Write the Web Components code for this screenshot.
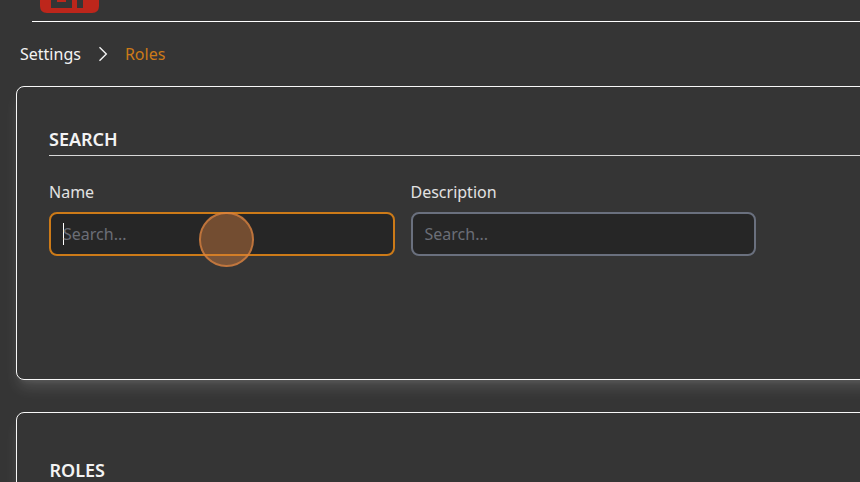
<!DOCTYPE html>
<html lang="en">
<head>
<meta charset="utf-8">
<title>Roles</title>
<style>
html,body{margin:0;height:100%;overflow:hidden;background:#353535}
body{font:16px/24px "Noto Sans",sans-serif;color:#f3f3f3}
</style>
</head>
<body>
<app-page></app-page>
<script>
const define = (name, html) => customElements.define(name, class extends HTMLElement {
  connectedCallback() {
    if (this.shadowRoot) return;
    const t = document.createElement('template');
    t.innerHTML = html;
    this.attachShadow({mode:'open'}).append(t.content.cloneNode(true));
  }
});

define('app-header', `<style>
:host{display:block;height:21px;margin-left:32px;border-bottom:1px solid #fff;overflow:hidden}
svg{display:block;margin-left:8px}
</style>
<svg width="59" height="13" viewBox="0 0 59 13"><path fill="#bd261b" d="M0 0H59V6Q59 13 52 13H7Q0 13 0 6Z"/><path fill="#353535" d="M11 0h6v2h9V0h6v8H11ZM37 0h6v8H37Z"/></svg>`);

define('bread-crumbs', `<style>
:host{display:flex;align-items:center;height:24px;padding:20px 0 20px 20px}
svg{display:block;margin:0 17px 0 17px}
.here{color:#cc7a18}
</style>
<span><slot name="parent"></slot></span>
<svg width="10" height="16" viewBox="0 0 10 16" fill="none" stroke="#f3f3f3" stroke-width="1.4"><path d="M1.5 1.2 8.3 8 1.5 14.8"/></svg>
<span class="here"><slot></slot></span>`);

define('panel-card', `<style>
:host{display:block;box-sizing:border-box;width:1100px;margin:0 0 32px 16px;padding:39px 32px;border:1px solid #f8f8f8;border-radius:8px;background:#353535;box-shadow:0 10px 15px -3px rgba(255,255,255,.14),0 4px 6px -4px rgba(255,255,255,.12)}
:host([spacious]){padding-top:44px}
h2{margin:0 0 25px;padding-bottom:1px;font-size:18px;line-height:27px;font-weight:600;text-transform:uppercase;border-bottom:1px solid #d8d8d8}
:host(:not([spacious])) h2{padding-bottom:2px;margin-bottom:24px}
:host([spacious]) h2{text-indent:.4px}
</style>
<h2><slot name="title"></slot></h2><slot></slot>`);

define('search-field', `<style>
:host{display:block;width:345.5px}
label{display:block;margin-bottom:8px;color:#e2e2e2}
.box{box-sizing:border-box;height:44px;display:flex;align-items:center;position:relative;padding:0 12px;border:2px solid #6a707e;border-radius:8px;background:#262626;color:#6b6e77}
:host([focused]) .box{border-color:#cc7a18}
.caret{display:none;width:1px;height:22px;background:#fff;margin-right:-1px}
:host([focused]) .caret{display:block}
</style>
<label><slot></slot></label><div class="box"><i class="caret"></i><span>Search...</span><slot name="overlay"></slot></div>`);

define('click-marker', `<style>
:host{position:absolute;left:148px;top:-2px;width:54.5px;height:54.5px;box-sizing:border-box;border-radius:50%;border:2px solid rgba(222,132,64,.7);background:rgba(222,132,64,.42)}
</style>`);

define('app-page', `<style>
:host{display:block;height:482px;overflow:hidden}
.fields{display:flex;gap:16px}
.search,.roles{height:294px}
</style>
<app-header></app-header>
<bread-crumbs><span slot="parent">Settings</span>Roles</bread-crumbs>
<panel-card class="search"><span slot="title">Search</span>
<div class="fields"><search-field focused>Name<click-marker slot="overlay"></click-marker></search-field><search-field>Description</search-field></div>
</panel-card>
<panel-card class="roles" spacious><span slot="title">Roles</span></panel-card>`);
</script>
</body>
</html>
